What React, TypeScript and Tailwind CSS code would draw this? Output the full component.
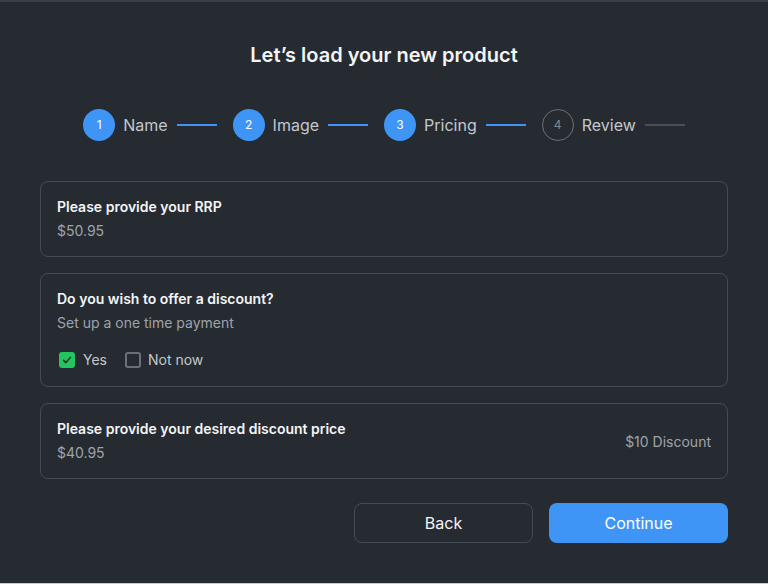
const steps = [
  { n: 1, label: "Name", done: true },
  { n: 2, label: "Image", done: true },
  { n: 3, label: "Pricing", done: true },
  { n: 4, label: "Review", done: false },
];

function Check() {
  return (
    <svg viewBox="0 0 16 16" className="w-3 h-3" fill="none">
      <path d="M3.5 8.5l3 3 6-7" stroke="#1f2a24" strokeWidth="2" strokeLinecap="round" strokeLinejoin="round" />
    </svg>
  );
}

export default function App() {
  return (
    <div
      className="w-[768px] h-[584px] bg-[#262b32] border-t-2 border-[#3b4048] border-b border-b-[#c9cbce] flex flex-col items-center"
      style={{ fontFamily: "Inter, 'Noto Sans', sans-serif" }}
    >
      <h1 className="mt-[40px] text-[20px] leading-[26px] font-semibold text-[#f3f4f6]">
        Let’s load your new product
      </h1>

      <div className="mt-[41px] flex items-center">
        {steps.map((s, i) => (
          <div key={s.n} className={`flex items-center ${i > 0 ? "ml-4" : ""}`}>
            {s.done ? (
              <div className="w-8 h-8 rounded-full bg-[#3e95f6] flex items-center justify-center text-[12px] text-white">
                {s.n}
              </div>
            ) : (
              <div className="w-8 h-8 rounded-full border border-[#6b7078] flex items-center justify-center text-[12px] text-[#80858c]">
                {s.n}
              </div>
            )}
            <span className="ml-2 text-[16px] text-[#c3c7cd]">{s.label}</span>
            <div className={`ml-[9px] w-10 h-[2px] ${s.done ? "bg-[#3e95f6]" : "bg-[#4a4f57]"}`} />
          </div>
        ))}
      </div>

      <div className="mt-[40px] w-[688px] flex flex-col gap-4">
        <div className="border border-[#464b53] rounded-lg px-4 py-[15px] flex flex-col gap-1">
          <p className="text-[14px] leading-5 font-semibold text-[#f3f4f6]">Please provide your RRP</p>
          <p className="text-[14px] leading-5 text-[#9ea3aa]">$50.95</p>
        </div>

        <div className="border border-[#464b53] rounded-lg px-4 pt-[15px] pb-4 flex flex-col">
          <p className="text-[14px] leading-5 font-semibold text-[#f3f4f6]">Do you wish to offer a discount?</p>
          <p className="mt-1 text-[14px] leading-5 text-[#9ea3aa]">Set up a one time payment</p>
          <div className="mt-[17px] flex items-center text-[14px] leading-5 text-[#c3c7cd]">
            <div className="ml-[2px] w-4 h-4 rounded-[3px] bg-[#22c55e] flex items-center justify-center">
              <Check />
            </div>
            <span className="ml-2">Yes</span>
            <div className="ml-[18px] w-4 h-4 rounded-[3px] border-2 border-[#6b7078]" />
            <span className="ml-[7px]">Not now</span>
          </div>
        </div>

        <div className="border border-[#464b53] rounded-lg px-4 py-[15px] flex items-center justify-between">
          <div className="flex flex-col gap-1">
            <p className="text-[14px] leading-5 font-semibold text-[#f3f4f6]">Please provide your desired discount price</p>
            <p className="text-[14px] leading-5 text-[#9ea3aa]">$40.95</p>
          </div>
          <span className="text-[14px] text-[#9ea3aa]">$10 Discount</span>
        </div>

        <div className="mt-2 flex justify-end gap-4">
          <button className="w-[179px] h-10 rounded-lg border border-[#464b53] text-[16px] text-[#f3f4f6]">Back</button>
          <button className="w-[179px] h-10 rounded-lg bg-[#3e95f6] text-[16px] text-white">Continue</button>
        </div>
      </div>
    </div>
  );
}
